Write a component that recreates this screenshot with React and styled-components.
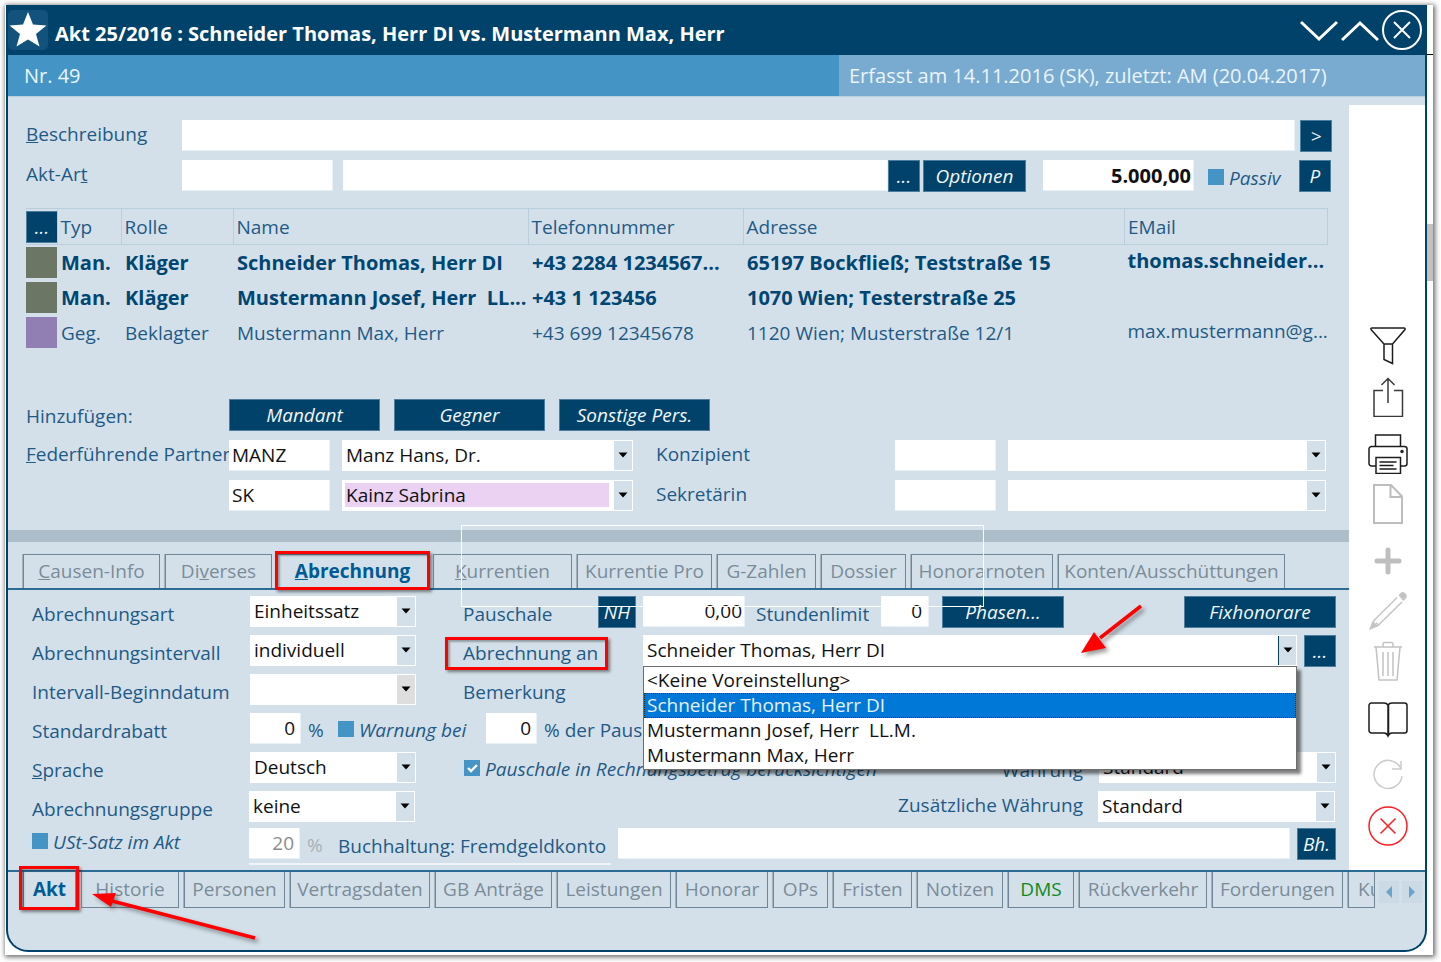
import React from 'react';
import styled, { createGlobalStyle, css } from 'styled-components';

const c = {
  navy: '#004269',
  panel: '#d4e0e9',
  blue: '#4495c5',
  light: '#79abd1',
  label: '#1f5a86',
  strong: '#004672',
  muted: '#7a8c99',
  line: '#6f8696',
  grid: '#b9cfde',
  red: '#ff0000',
};

const GlobalStyle = createGlobalStyle`
  * { box-sizing: border-box; }
  body { margin: 0; background: #fff; }
  body, input, select, button {
    font-family: "Open Sans", "Noto Sans", sans-serif;
    font-size: 19px;
    line-height: 26px;
  }
  button { padding: 0; cursor: pointer; }
`;

const Page = styled.div`
  padding: 5px 8px 22px 5px;
`;
const Sheet = styled.div`
  padding: 0 6px 3px 1px;
  background:
    linear-gradient(#000, #000) right 0 top 49px / 6px 1px no-repeat,
    linear-gradient(#c1c1c1, #c1c1c1) right 0 top 219px / 6px 57px no-repeat,
    #fff;
  box-shadow: 1px 1px 5px 1px rgba(0, 0, 0, 0.6);
`;
const Window = styled.div`
  position: relative;
  border: solid ${c.navy};
  border-width: 0 2px 2px 2px;
  border-radius: 0 0 22px 22px;
  background: ${c.panel};
  color: ${c.label};
`;

const TitleBar = styled.header`
  display: flex;
  align-items: center;
  height: 50px;
  gap: 3px;
  padding-right: 3px;
  background: ${c.navy};
  color: #fff;
`;
const StarButton = styled.button`
  width: 40px;
  height: 40px;
  border: 0;
  border-radius: 5px;
  background: #12527c;
  svg { display: block; }
`;
const Title = styled.h1`
  flex: 1;
  margin: 0;
  padding: 8px 0 0 4px;
  font-size: 20px;
  line-height: 26px;
  font-weight: 700;
`;
const GlyphButton = styled.button`
  width: ${(p) => p.$w || 38}px;
  height: 40px;
  border: 0;
  background: none;
  svg { display: block; }
`;
const InfoBar = styled.div`
  display: flex;
  height: 42px;
  line-height: 42px;
  background: ${c.blue};
  border-bottom: 1px solid ${c.grid};
  color: #eaf4fb;
  font-size: 20px;
`;
const InfoMain = styled.div`
  flex: 1;
  padding-left: 16px;
`;
const InfoSide = styled.div`
  width: 586px;
  padding-left: 10px;
  background: ${c.light};
`;

const Body = styled.div`
  display: flex;
`;
const Main = styled.main`
  flex: 1;
  min-width: 0;
`;
const Upper = styled.section`
  padding: 23px 17px 19px 18px;
`;
const Row = styled.div`
  display: flex;
  height: 31px;
  margin-bottom: ${(p) => p.$after ?? 9}px;
`;
const Spacer = styled.div`
  flex: ${(p) => (p.$w ? `0 0 ${p.$w}px` : '1')};
`;
const Label = styled.label`
  flex: 0 0 ${(p) => (p.$w ? `${p.$w}px` : 'auto')};
  min-width: 0;
  white-space: nowrap;
  padding-top: ${(p) => (p.$low ? 5 : 1)}px;
`;
const Box = styled.input`
  min-width: 0;
  flex: ${(p) => (p.$w ? `0 0 ${p.$w}px` : '1')};
  height: 31px;
  padding: 0 ${(p) => p.$pad ?? 3}px;
  border: 1px solid #e8f1f6;
  border-width: 0 1px 1px 0;
  border-radius: 0;
  background: #fff;
  color: ${(p) => (p.disabled ? '#8b8b8b' : '#111')};
  text-align: ${(p) => (p.$right ? 'right' : 'left')};
  font-weight: ${(p) => (p.$bold ? 700 : 400)};
  font-size: ${(p) => (p.$bold ? 20 : 19)}px;
`;
const Button = styled.button`
  flex: 0 0 ${(p) => p.$w || 32}px;
  width: ${(p) => p.$w || 32}px;
  height: 32px;
  border: 1px solid #4c7d9c;
  background: ${c.navy};
  color: #f1f6fa;
  font-style: italic;
  white-space: nowrap;
`;

const ComboFrame = styled.div`
  position: relative;
  display: grid;
  grid-template-columns: minmax(0, 1fr);
  flex: ${(p) => (p.$w ? `0 0 ${p.$w}px` : '1')};
  height: 31px;
  background: #fff;
`;
const ComboSelect = styled.select`
  grid-area: 1 / 1;
  appearance: none;
  width: 100%;
  height: 31px;
  border: 0;
  padding: 0 20px 0 4px;
  background: ${(p) => (p.$tint ? `linear-gradient(#ebd2f2, #ebd2f2) 3px 3px / calc(100% - 27px) 24px no-repeat` : 'transparent')};
  color: #111;
`;
const ComboArrow = styled.span`
  grid-area: 1 / 1;
  justify-self: end;
  display: grid;
  place-items: center;
  width: 18px;
  height: 29px;
  margin: 1px 1px 0 0;
  background: ${(p) => (p.$grey ? '#dedede' : c.panel)};
  border-left: ${(p) => (p.$focus ? `1px solid ${c.navy}` : 0)};
  pointer-events: none;
`;

const CheckLabel = styled.label`
  display: flex;
  flex: 0 0 ${(p) => (p.$w ? `${p.$w}px` : 'auto')};
  gap: 5px;
  align-items: flex-start;
  padding-top: ${(p) => p.$top ?? 4}px;
  font-style: italic;
  white-space: nowrap;
`;
const Check = styled.input`
  appearance: none;
  width: 16px;
  height: 16px;
  margin: 4px 0 0;
  background: ${c.blue};
  border: 0;
  &:checked {
    background: ${c.blue} url("data:image/svg+xml,%3Csvg xmlns='http://www.w3.org/2000/svg' viewBox='0 0 16 16'%3E%3Cpath d='M4 8l3 3 6-6' fill='none' stroke='white' stroke-width='2.4'/%3E%3C/svg%3E");
  }
`;

const Table = styled.table`
  width: calc(100% - 4px);
  margin-top: 17px;
  table-layout: fixed;
  border-collapse: collapse;
  white-space: nowrap;
`;
const Th = styled.th`
  height: 36px;
  padding: 1px 0 0 3px;
  border: 1px solid ${c.grid};
  border-left-width: ${(p) => (p.$first ? 0 : 1)}px;
  font-weight: 400;
  text-align: left;
  button { display: block; margin: 0 0 0 -3px; }
`;
const Tr = styled.tr`
  height: 35px;
  font-size: ${(p) => (p.$bold ? 20 : 19)}px;
  font-weight: ${(p) => (p.$bold ? 700 : 400)};
  color: ${(p) => (p.$bold ? c.strong : c.label)};
`;
const Td = styled.td`
  padding: ${(p) => (p.$raised ? '0 0 2px 3px' : '2px 0 0 4px')};
  overflow: hidden;
  white-space: pre;
`;
const SwatchCell = styled.td`
  padding: 0;
`;
const Swatch = styled.div`
  width: 31px;
  height: 31px;
  background: ${(p) => p.$color};
`;
const AddLine = styled(Row)`
  margin-top: 49px;
`;
const AddLabel = styled.span`
  flex: 0 0 203px;
  padding-top: 4px;
`;
const Adders = styled.div`
  display: flex;
  gap: 14px;
`;

const Splitter = styled.div`
  height: 12px;
  background: #aebdca;
`;
const Tabs = styled.nav`
  display: flex;
  gap: 5px;
  ${(p) =>
    p.$bottom
      ? css`
          border-top: 2px solid #2b6c96;
          padding: 0 4px 42px 15px;
        `
      : css`
          border-bottom: 2px solid #2b6c96;
          padding: 12px 0 0 15px;
        `}
`;
const Tab = styled.button`
  position: relative;
  flex: 0 0 ${(p) => p.$w}px;
  height: ${(p) => (p.$bottom ? 36 : 34)}px;
  border: 1px solid ${c.line};
  ${(p) => (p.$bottom ? 'border-top: 0;' : 'border-bottom: 0;')}
  box-shadow: -1px 0 0 #a3b3be;
  background: none;
  color: ${(p) => (p.$active ? '#005a94' : p.$green ? '#0f8a1c' : c.muted)};
  font-weight: ${(p) => (p.$active ? 700 : 400)};
  white-space: nowrap;
`;
const CutTab = styled(Tab)`
  overflow: hidden;
  padding-left: 9px;
  text-align: left;
`;
const Marker = styled.span`
  position: absolute;
  inset: ${(p) => p.$inset};
  border: 3px solid ${c.red};
  box-shadow: 2px 2px 3px rgba(0, 0, 0, 0.45), inset 2px 2px 2px rgba(0, 0, 0, 0.3);
  pointer-events: none;
`;
const GhostFrame = styled.div`
  position: absolute;
  left: 453px;
  top: 520px;
  width: 523px;
  height: 82px;
  border: 1px solid #fff;
  pointer-events: none;
`;
const Arrow = styled.svg`
  position: absolute;
  left: ${(p) => p.$x}px;
  right: ${(p) => p.$r}px;
  top: ${(p) => p.$y}px;
  z-index: 3;
  pointer-events: none;
  filter: drop-shadow(3px 3px 2px rgba(0, 0, 0, 0.4));
`;
const Lower = styled.section`
  padding: 6px 13px 0 24px;
`;
const Marked = styled.div`
  position: relative;
  display: flex;
  flex: 0 0 180px;
`;
const ClippedField = styled.div`
  width: 362px;
  height: 2px;
  margin: 4px 0 5px 217px;
  background: #eef4f8;
`;
const Percent = styled.span`
  flex: 0 0 ${(p) => p.$w}px;
  padding: 4px 0 0 7px;
  color: ${(p) => (p.$off ? '#a9b1b7' : c.label)};
  white-space: nowrap;
`;

const Popup = styled.ul`
  position: absolute;
  z-index: 2;
  top: 31px;
  left: 0;
  right: 0;
  margin: 0;
  padding: 1px 0;
  list-style: none;
  border: 1px solid #6e6e6e;
  background: #fff;
  box-shadow: 4px 4px 3px rgba(0, 0, 0, 0.5);
`;
const Option = styled.li`
  height: 25px;
  padding-left: 3px;
  line-height: 25px;
  white-space: pre;
  color: ${(p) => (p.$on ? '#e6f2fd' : '#111')};
  background: ${(p) => (p.$on ? '#0078d7' : 'none')};
  outline: ${(p) => (p.$on ? '1px dotted #3a2a10' : 'none')};
  outline-offset: -1px;
`;

const SideBar = styled.aside`
  display: flex;
  flex-direction: column;
  align-items: center;
  justify-content: flex-end;
  width: 76px;
  margin-top: 8px;
  padding: 0 0 24px 2px;
  background: #fff;
`;
const Tool = styled.button`
  width: 40px;
  height: 40px;
  margin-top: ${(p) => p.$before || 10}px;
  border: 0;
  background: none;
  svg { display: block; }
`;
const Scroller = styled.div`
  display: flex;
  gap: 3px;
  margin-left: -1px;
  padding: 9px 0 0;
`;
const ScrollButton = styled.button`
  width: 20px;
  height: 22px;
  border: 0;
  background: #cbdae5;
  display: grid;
  place-items: center;
`;

function Combo({ id, w, options, tint, grey, focus, label, children }) {
  return (
    <ComboFrame $w={w}>
      <ComboSelect id={id} $tint={tint} aria-label={label}>
        {options.map((o) => (
          <option key={o}>{o}</option>
        ))}
      </ComboSelect>
      <ComboArrow $grey={grey} $focus={focus}>
        <svg width="10" height="6" viewBox="0 0 10 6">
          <path d="M0.500 0.500h9L5 5.500z" fill="#000" />
        </svg>
      </ComboArrow>
      {children}
    </ComboFrame>
  );
}

const tools = [
  ['Filter', 10, '#1c1c1c', <path key="a" d="M3 3.500q-.5-1.500 1-1.500h32q1.500 0 1 1.500L24.500 18v19.500l-8.500-4V18L3 3.500M16 18h8.500" />],
  ['Exportieren', 11, '#3a3a3a', <path key="a" d="M15 13.500H6V39.500h28.500V13.500H26M20 26V1.500M13.500 8l6.500-6.500L26.500 8" />],
  ['Drucken', 17, '#1c1c1c', (
    <g key="a">
      <path d="M7.500 12V1h25v11M8 32H3.500a2.500 2.500 0 0 1-2.500-2.500V15a2.500 2.500 0 0 1 2.500-2.500h33a2.500 2.500 0 0 1 2.500 2.500v14.500a2.500 2.500 0 0 1-2.500 2.500H32.500" />
      <path d="M8 23.500h24.500v16H8zM11.500 28h17M11.500 31.500h14M11.500 35h17" />
      <circle cx="34" cy="17.500" r="1" />
    </g>
  )],
  ['Neu', 10, '#bdbdbd', <path key="a" strokeWidth="2" d="M6 1h17l11 11.500V39H6zM22.500 1v12H34" />],
  ['Hinzufügen', 17, '#bfbfbf', <path key="a" strokeWidth="5" strokeLinecap="round" d="M20 9v22M9 20h22" />],
  ['Bearbeiten', 10, '#c6c6c6', (
    <g key="a">
      <path d="M29 6.500L6 29.500l-3.500 8 8-3.500L34 11M8 31.500l3 3" />
      <path fill="#c2c2c2" d="M31.500 4.500l1-1.500a3 3 0 0 1 4.500 4.500l-1.500 1.500zM2.500 37.500L5 31l4 4z" />
    </g>
  )],
  ['Löschen', 10, '#c2c2c2', <path key="a" d="M6 6h28M15 6V3a1.500 1.500 0 0 1 1.500-1.500h7A1.500 1.500 0 0 1 25 3v3M8 6l3 33h18l3-33M15 11v24M20 11v24M25 11v24" />],
  ['Nachschlagen', 19, '#1c1c1c', <path key="a" d="M20 5c-1-1.500-2-2-4-2H3.500a2.500 2.500 0 0 0-2.500 2.500v25a2.500 2.500 0 0 0 2.500 2.500H16c2 0 3 .5 4 3 1-2.500 2-3 4-3h12.500a2.500 2.500 0 0 0 2.500-2.500V5.500a2.500 2.500 0 0 0-2.500-2.500H24c-2 0-3 .5-4 2zv31M20.500 5v31" />],
  ['Aktualisieren', 15, '#cbcbcb', <path key="a" d="M33 14A14 14 0 1 0 34 21M33 6v8h-9" />],
  ['Schließen', 11, '#ff1c24', <g key="a"><circle cx="20" cy="20" r="19" /><path d="M12.500 12.500l15 15M27.500 12.500l-15 15" /></g>],
];

const persons = [
  ['#6b7664', true, 'Man.', 'Kläger', 'Schneider Thomas, Herr DI', '+43 2284 1234567...', '65197 Bockfließ; Teststraße 15', 'thomas.schneider...'],
  ['#6b7664', true, 'Man.', 'Kläger', 'Mustermann Josef, Herr  LL...', '+43 1 123456', '1070 Wien; Testerstraße 25', ''],
  ['#917fb3', false, 'Geg.', 'Beklagter', 'Mustermann Max, Herr', '+43 699 12345678', '1120 Wien; Musterstraße 12/1', 'max.mustermann@g...'],
];

const detailTabs = [
  [<><u>C</u>ausen-Info</>, 137],
  [<>Di<u>v</u>erses</>, 107],
  [<><u>A</u>brechnung</>, 151, true],
  [<><u>K</u>urrentien</>, 139],
  ['Kurrentie Pro', 135],
  ['G-Zahlen', 99],
  ['Dossier', 85],
  ['Honorarnoten', 142],
  ['Konten/Ausschüttungen', 227],
];

const fileTabs = [
  ['Historie', 98], ['Personen', 101], ['Vertragsdaten', 140], ['GB Anträge', 117],
  ['Leistungen', 114], ['Honorar', 92], ['OPs', 55], ['Fristen', 79], ['Notizen', 86],
  ['DMS', 66], ['Rückverkehr', 128], ['Forderungen', 131],
];

export default function App() {
  return (
    <Page>
      <GlobalStyle />
      <Sheet>
        <Window>
          <TitleBar>
            <StarButton aria-label="Favorit">
              <svg width="40" height="40" viewBox="0 0 40 40">
                <path fill="#fff" d="M20 2l5 12.500 13.500 1-10.500 8.500 3.500 12.500L20 29.500 8.500 36.500 12 24 1.500 15.500l13.500-1z" />
              </svg>
            </StarButton>
            <Title>Akt 25/2016 : Schneider Thomas, Herr DI vs. Mustermann Max, Herr</Title>
            <GlyphButton aria-label="Nach unten">
              <svg width="38" height="40" viewBox="0 0 38 40" fill="none" stroke="#fff" strokeWidth="3">
                <path d="M1 12l18 17 18-17" />
              </svg>
            </GlyphButton>
            <GlyphButton aria-label="Nach oben">
              <svg width="38" height="40" viewBox="0 0 38 40" fill="none" stroke="#fff" strokeWidth="3">
                <path d="M1 30l18-17 18 17" />
              </svg>
            </GlyphButton>
            <GlyphButton $w={40} aria-label="Schließen">
              <svg width="40" height="40" viewBox="0 0 40 40" fill="none" stroke="#fff" strokeWidth="2">
                <circle cx="20" cy="20" r="19" />
                <path d="M12 12l16 16M28 12L12 28" />
              </svg>
            </GlyphButton>
          </TitleBar>
          <InfoBar>
            <InfoMain>Nr. 49</InfoMain>
            <InfoSide>Erfasst am 14.11.2016 (SK), zuletzt: AM (20.04.2017)</InfoSide>
          </InfoBar>
          <Body>
            <Main>
              <Upper>
                <Row>
                  <Label htmlFor="beschreibung" $w={156}><u>B</u>eschreibung</Label>
                  <Box id="beschreibung" />
                  <Spacer $w={5} />
                  <Button>&gt;</Button>
                </Row>
                <Row>
                  <Label htmlFor="aktart" $w={156}>Akt-Ar<u>t</u></Label>
                  <Box id="aktart" $w={151} />
                  <Spacer $w={10} />
                  <Box aria-label="Akt-Art Bezeichnung" />
                  <Button>...</Button>
                  <Spacer $w={3} />
                  <Button $w={103}>Optionen</Button>
                  <Spacer $w={17} />
                  <Box $w={151} $right $bold $pad={2} aria-label="Streitwert" defaultValue="5.000,00" />
                  <Spacer $w={14} />
                  <CheckLabel $w={91} $top={5}><Check type="checkbox" />Passiv</CheckLabel>
                  <Button>P</Button>
                  <Spacer $w={1} />
                </Row>
                <Table>
                  <colgroup>
                    <col style={{ width: 31 }} />
                    <col style={{ width: 64 }} />
                    <col style={{ width: 112 }} />
                    <col style={{ width: 295 }} />
                    <col style={{ width: 215 }} />
                    <col />
                    <col style={{ width: 203 }} />
                  </colgroup>
                  <thead>
                    <tr>
                      <Th $first><Button>...</Button></Th>
                      <Th $first>Typ</Th>
                      <Th>Rolle</Th>
                      <Th>Name</Th>
                      <Th>Telefonnummer</Th>
                      <Th>Adresse</Th>
                      <Th>EMail</Th>
                    </tr>
                  </thead>
                  <tbody>
                    {persons.map(([color, bold, ...cells]) => (
                      <Tr key={cells[2]} $bold={bold}>
                        <SwatchCell><Swatch $color={color} /></SwatchCell>
                        {cells.map((t, i) => (
                          <Td key={i} $raised={i === 5}>{t}</Td>
                        ))}
                      </Tr>
                    ))}
                  </tbody>
                </Table>
                <AddLine $after={10}>
                  <AddLabel>Hinzufügen:</AddLabel>
                  <Adders>
                    <Button $w={151}>Mandant</Button>
                    <Button $w={151}>Gegner</Button>
                    <Button $w={151}>Sonstige Pers.</Button>
                  </Adders>
                </AddLine>
                <Row>
                  <Label htmlFor="partner" $w={203}><u>F</u>ederführende Partner</Label>
                  <Box id="partner" $w={101} defaultValue="MANZ" />
                  <Spacer $w={12} />
                  <Combo w={291} label="Partner Name" options={['Manz Hans, Dr.']} />
                  <Spacer $w={23} />
                  <Label htmlFor="konz" $w={239}>Konzipient</Label>
                  <Box id="konz" $w={101} />
                  <Spacer $w={12} />
                  <Combo label="Konzipient Name" options={['']} />
                  <Spacer $w={6} />
                </Row>
                <Row $after={0}>
                  <Spacer $w={203} />
                  <Box $w={101} aria-label="Kürzel" defaultValue="SK" />
                  <Spacer $w={12} />
                  <Combo w={291} tint label="Sachbearbeiter Name" options={['Kainz Sabrina']} />
                  <Spacer $w={23} />
                  <Label htmlFor="sekr" $w={239}>Sekretärin</Label>
                  <Box id="sekr" $w={101} />
                  <Spacer $w={12} />
                  <Combo label="Sekretärin Name" options={['']} />
                  <Spacer $w={6} />
                </Row>
              </Upper>
              <Splitter />
              <Tabs>
                {detailTabs.map(([t, w, active], i) => (
                  <Tab key={i} $w={w} $active={active}>
                    {t}
                    {active && <Marker $inset="-4px -3px -2px -3px" />}
                  </Tab>
                ))}
              </Tabs>
              <Lower>
                <Row $after={8}>
                  <Label htmlFor="art" $w={218} $low>Abrechnungsart</Label>
                  <Combo id="art" w={166} options={['Einheitssatz']} />
                  <Spacer $w={47} />
                  <Label htmlFor="pausch" $w={135} $low>Pauschale</Label>
                  <Button $w={38}>NH</Button>
                  <Spacer $w={7} />
                  <Box id="pausch" $w={102} $right $pad={2} defaultValue="0,00" />
                  <Spacer $w={11} />
                  <Label htmlFor="limit" $w={125} $low>Stundenlimit</Label>
                  <Box id="limit" $w={48} $right $pad={6} defaultValue="0" />
                  <Spacer $w={13} />
                  <Button $w={122}>Phasen...</Button>
                  <Spacer />
                  <Button $w={152}>Fixhonorare</Button>
                </Row>
                <Row $after={8}>
                  <Label htmlFor="intervall" $w={218} $low>Abrechnungsintervall</Label>
                  <Combo id="intervall" w={166} options={['individuell']} />
                  <Spacer $w={47} />
                  <Marked>
                    <Label htmlFor="an" $low>Abrechnung an</Label>
                    <Marker $inset="2px 35px -4px -18px" />
                  </Marked>
                  <Combo id="an" focus options={['Schneider Thomas, Herr DI']}>
                    <Popup role="listbox" aria-label="Abrechnung an">
                      <Option role="option">&lt;Keine Voreinstellung&gt;</Option>
                      <Option role="option" aria-selected $on>Schneider Thomas, Herr DI</Option>
                      <Option role="option">{'Mustermann Josef, Herr  LL.M.'}</Option>
                      <Option role="option">Mustermann Max, Herr</Option>
                    </Popup>
                    <Arrow $r={153} $y={-33} width="66" height="54" viewBox="0 0 66 54">
                      <path d="M63 4L22 36" stroke={c.red} strokeWidth="3.500" />
                      <path d="M3 51l13-21 12 16z" fill={c.red} />
                    </Arrow>
                  </Combo>
                  <Spacer $w={7} />
                  <Button>...</Button>
                </Row>
                <Row $after={8}>
                  <Label htmlFor="beginn" $w={218} $low>Intervall-Beginndatum</Label>
                  <Combo id="beginn" w={166} grey options={['']} />
                  <Spacer $w={47} />
                  <Label as="span" $low>Bemerkung</Label>
                </Row>
                <Row $after={8}>
                  <Label htmlFor="rabatt" $w={218} $low>Standardrabatt</Label>
                  <Box id="rabatt" $w={51} $right $pad={5} defaultValue="0" />
                  <Percent $w={37}>%</Percent>
                  <CheckLabel $w={148}><Check type="checkbox" />Warnung bei</CheckLabel>
                  <Box $w={51} $right $pad={5} aria-label="Warnung bei Prozent" defaultValue="0" />
                  <Percent $w={150}>% der Pauschale</Percent>
                </Row>
                <Row $after={8}>
                  <Label htmlFor="sprache" $w={218} $low><u>S</u>prache</Label>
                  <Combo id="sprache" w={166} options={['Deutsch']} />
                  <Spacer $w={48} />
                  <CheckLabel><Check type="checkbox" defaultChecked />Pauschale in Rechnungsbetrag berücksichtigen</CheckLabel>
                  <Spacer />
                  <Label htmlFor="waehrung" $low>Währung</Label>
                  <Spacer $w={16} />
                  <Combo id="waehrung" w={237} options={['Standard']} />
                </Row>
                <Row $after={6}>
                  <Label htmlFor="gruppe" $w={217} $low>Abrechnungsgruppe</Label>
                  <Combo id="gruppe" w={166} options={['keine']} />
                  <Spacer />
                  <Label htmlFor="zusatz">Zusätzliche Währung</Label>
                  <Spacer $w={15} />
                  <Combo id="zusatz" w={237} options={['Standard']} />
                  <Spacer $w={1} />
                </Row>
                <Row $after={0}>
                  <CheckLabel $w={217} $top={1}><Check type="checkbox" />USt-Satz im Akt</CheckLabel>
                  <Box $w={51} $right $pad={5} disabled aria-label="USt-Satz" defaultValue="20" />
                  <Percent $w={38} $off>%</Percent>
                  <Label htmlFor="konto" $w={280} $low>Buchhaltung: Fremdgeldkonto</Label>
                  <Box id="konto" />
                  <Spacer $w={7} />
                  <Button $w={39}>Bh.</Button>
                </Row>
                <ClippedField />
              </Lower>
            </Main>
            <SideBar>
              {tools.map(([name, before, color, shape]) => (
                <Tool key={name} $before={before} aria-label={name}>
                  <svg width="40" height="40" viewBox="0 0 40 40" fill="none" stroke={color} strokeWidth="1.500">
                    {shape}
                  </svg>
                </Tool>
              ))}
            </SideBar>
          </Body>
          <Tabs $bottom>
            <Tab $w={53} $bottom $active>
              Akt
              <Marker $inset="-6px -4px -3px -5px" />
            </Tab>
            {fileTabs.map(([t, w]) => (
              <Tab key={t} $w={w} $bottom $green={t === 'DMS'}>{t}</Tab>
            ))}
            <CutTab $w={27} $bottom>Ku</CutTab>
            <Scroller>
              <ScrollButton aria-label="Tabs zurück">
                <svg width="8" height="14" viewBox="0 0 8 14"><path d="M7 1v12L1 7z" fill="#6ba4cd" /></svg>
              </ScrollButton>
              <ScrollButton aria-label="Tabs weiter">
                <svg width="8" height="14" viewBox="0 0 8 14"><path d="M1 1v12l6-6z" fill="#6ba4cd" /></svg>
              </ScrollButton>
            </Scroller>
          </Tabs>
          <GhostFrame />
          <Arrow $x={82} $y={884} width="172" height="56" viewBox="0 0 172 56">
            <path d="M165 49L22 12" stroke={c.red} strokeWidth="3.500" />
            <path d="M2 5l24-1-5 14z" fill={c.red} />
          </Arrow>
        </Window>
      </Sheet>
    </Page>
  );
}
